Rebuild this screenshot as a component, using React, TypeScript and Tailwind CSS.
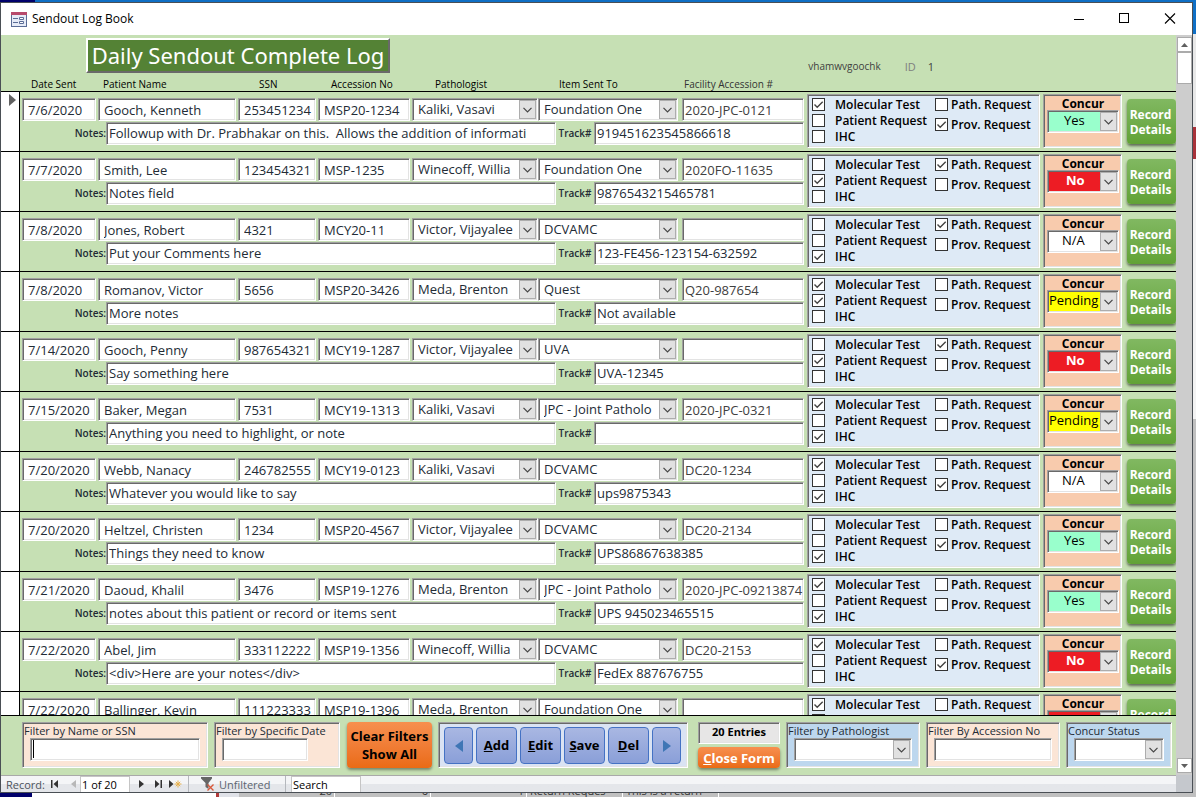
import { useState } from "react";
import type { ReactNode } from "react";

type Entry = {
  date: string;
  name: string;
  ssn: string;
  accession: string;
  pathologist: string;
  sentTo: string;
  facility: string;
  notes: string;
  track: string;
  molecular?: boolean;
  patient?: boolean;
  ihc?: boolean;
  path?: boolean;
  prov?: boolean;
  concur: "Yes" | "No" | "N/A" | "Pending";
};

const entries: Entry[] = [
  { date: "7/6/2020", name: "Gooch, Kenneth", ssn: "253451234", accession: "MSP20-1234", pathologist: "Kaliki, Vasavi", sentTo: "Foundation One", facility: "2020-JPC-0121", notes: "Followup with Dr. Prabhakar on this.  Allows the addition of informati", track: "919451623545866618", molecular: true, prov: true, concur: "Yes" },
  { date: "7/7/2020", name: "Smith, Lee", ssn: "123454321", accession: "MSP-1235", pathologist: "Winecoff, Willia", sentTo: "Foundation One", facility: "2020FO-11635", notes: "Notes field", track: "9876543215465781", patient: true, path: true, concur: "No" },
  { date: "7/8/2020", name: "Jones, Robert", ssn: "4321", accession: "MCY20-11", pathologist: "Victor, Vijayalee", sentTo: "DCVAMC", facility: "", notes: "Put your Comments here", track: "123-FE456-123154-632592", ihc: true, path: true, concur: "N/A" },
  { date: "7/8/2020", name: "Romanov, Victor", ssn: "5656", accession: "MSP20-3426", pathologist: "Meda, Brenton", sentTo: "Quest", facility: "Q20-987654", notes: "More notes", track: "Not available", molecular: true, patient: true, concur: "Pending" },
  { date: "7/14/2020", name: "Gooch, Penny", ssn: "987654321", accession: "MCY19-1287", pathologist: "Victor, Vijayalee", sentTo: "UVA", facility: "", notes: "Say something here", track: "UVA-12345", patient: true, path: true, concur: "No" },
  { date: "7/15/2020", name: "Baker, Megan", ssn: "7531", accession: "MCY19-1313", pathologist: "Kaliki, Vasavi", sentTo: "JPC - Joint Patholo", facility: "2020-JPC-0321", notes: "Anything you need to highlight, or note", track: "", molecular: true, ihc: true, concur: "Pending" },
  { date: "7/20/2020", name: "Webb, Nanacy", ssn: "246782555", accession: "MCY19-0123", pathologist: "Kaliki, Vasavi", sentTo: "DCVAMC", facility: "DC20-1234", notes: "Whatever you would like to say", track: "ups9875343", molecular: true, ihc: true, prov: true, concur: "N/A" },
  { date: "7/20/2020", name: "Heltzel, Christen", ssn: "1234", accession: "MSP20-4567", pathologist: "Victor, Vijayalee", sentTo: "DCVAMC", facility: "DC20-2134", notes: "Things they need to know", track: "UPS86867638385", ihc: true, prov: true, concur: "Yes" },
  { date: "7/21/2020", name: "Daoud, Khalil", ssn: "3476", accession: "MSP19-1276", pathologist: "Meda, Brenton", sentTo: "JPC - Joint Patholo", facility: "2020-JPC-09213874", notes: "notes about this patient or record or items sent", track: "UPS 945023465515", molecular: true, ihc: true, concur: "Yes" },
  { date: "7/22/2020", name: "Abel, Jim", ssn: "333112222", accession: "MSP19-1356", pathologist: "Winecoff, Willia", sentTo: "DCVAMC", facility: "DC20-2153", notes: "<div>Here are your notes</div>", track: "FedEx 887676755", molecular: true, prov: true, concur: "No" },
  { date: "7/22/2020", name: "Ballinger, Kevin", ssn: "111223333", accession: "MSP19-1396", pathologist: "Meda, Brenton", sentTo: "Foundation One", facility: "", notes: "", track: "", molecular: true, concur: "No" },
];

const concurStyles = {
  Yes: "bg-[#99ffcc] pl-4",
  No: "bg-[#ed1c24] pl-[18px] font-bold text-white",
  "N/A": "bg-white pl-3.5",
  Pending: "bg-[#ffff00] pl-px",
};

const sunken =
  "border border-t-[#a0a0a0] border-l-[#a0a0a0] border-r-white border-b-white shadow-[inset_1px_1px_0_#696969,inset_-1px_-1px_0_#e3e3e3]";

const mainCols = "grid grid-cols-[76px_140fr_80px_94px_126fr_144fr_122fr]";

const TextField = ({ label, value, className = "" }: { label: string; value: string; className?: string }) => (
  <input
    type="text"
    aria-label={label}
    defaultValue={value}
    className={`h-[23px] min-w-0 bg-white outline-none ${sunken} ${className}`}
  />
);

const Arrow = () => (
  <span className="pointer-events-none absolute top-0.5 right-0.5 bottom-0.5 flex w-[17px] items-center justify-center border border-[#adadad] bg-[#e1e1e1]">
    <svg width="9" height="6" viewBox="0 0 9 6" fill="none" stroke="#444" strokeWidth="1.2">
      <path d="M0.5 0.8 4.5 4.8 8.5 0.8" />
    </svg>
  </span>
);

const Combo = ({ label, value, className = "", selectClass = "bg-white pl-[5px]" }: { label: string; value: string; className?: string; selectClass?: string }) => (
  <div className={`relative h-[23px] min-w-0 ${className}`}>
    <select
      aria-label={label}
      defaultValue={value}
      className={`block h-full w-full appearance-none overflow-hidden pr-[18px] outline-none ${sunken} ${selectClass}`}
    >
      <option>{value}</option>
    </select>
    <Arrow />
  </div>
);

const Check = ({ label, checked = false, gap = "gap-2.5" }: { label: string; checked?: boolean; gap?: string }) => (
  <label className={`flex h-[13px] items-center whitespace-nowrap ${gap}`}>
    <span className="relative size-[13px]">
      <input
        type="checkbox"
        defaultChecked={checked}
        className="peer block size-[13px] appearance-none border border-[#333] bg-white"
      />
      <svg
        viewBox="0 0 13 13"
        fill="none"
        stroke="#444"
        strokeWidth="1.4"
        className="pointer-events-none absolute inset-0 hidden size-[13px] peer-checked:block"
      >
        <path d="M2.5 6.5 5.2 9.2 10.7 3.7" />
      </svg>
    </span>
    {label}
  </label>
);

const EntryRow = ({ entry, current }: { entry: Entry; current: boolean }) => (
  <li className="flex h-[60px] shrink-0 border-b border-black">
    <div className="w-[19px] shrink-0 border-r border-black bg-white pt-0.5 pl-2">
      {current && (
        <svg width="7" height="12" viewBox="0 0 7 12" fill="#606060">
          <path d="M0 0 7 6 0 12z" />
        </svg>
      )}
    </div>
    <div className="min-w-0 flex-1 pt-1.5 pl-0.5 text-[13px] text-[#222b35]">
      <div className={mainCols}>
        <TextField label="Date Sent" value={entry.date} className="mr-0.5 pl-[5px]" />
        <TextField label="Patient Name" value={entry.name} className="mr-0.5 pl-[5px]" />
        <TextField label="SSN" value={entry.ssn} className="mr-0.5 pl-[5px]" />
        <TextField label="Accession No" value={entry.accession} className="mr-0.5 pl-[5px]" />
        <Combo label="Pathologist" value={entry.pathologist} />
        <Combo label="Item Sent To" value={entry.sentTo} className="mr-1" />
        <TextField label="Facility Accession #" value={entry.facility} className="pl-0.5 text-[#404040]" />
      </div>
      <div className="mt-px grid grid-cols-[84px_450fr_38px_210fr]">
        <span className="pt-1 text-right text-[10px] font-semibold">Notes:</span>
        <TextField label="Notes" value={entry.notes} className="pb-0.5 pl-0.5" />
        <span className="pt-1 text-center text-[10px] font-semibold">Track#</span>
        <TextField label="Tracking number" value={entry.track} className="pb-0.5 pl-0.5" />
      </div>
    </div>
    <div className={`mt-0.5 ml-[3px] flex h-[54px] w-[233px] shrink-0 bg-[#deeaf6] pt-[3px] pl-1 text-[12px] font-semibold text-black ${sunken}`}>
      <div className="flex w-[123px] flex-col gap-[3px]">
        <Check label="Molecular Test" checked={entry.molecular} />
        <Check label="Patient Request" checked={entry.patient} />
        <Check label="IHC" checked={entry.ihc} />
      </div>
      <div className="flex flex-col gap-[7px]">
        <Check label="Path. Request" checked={entry.path} gap="gap-[3px]" />
        <Check label="Prov. Request" checked={entry.prov} gap="gap-[3px]" />
      </div>
    </div>
    <div className={`mt-0.5 ml-[3px] h-[54px] w-[79px] shrink-0 bg-[#f8cbad] pr-0.5 pl-[3px] ${sunken}`}>
      <div className="h-[15px] pt-px text-center text-[12px] leading-4 font-bold">Concur</div>
      <Combo label="Concur" value={entry.concur} selectClass={`pb-0.5 text-[13px] ${concurStyles[entry.concur]}`} />
    </div>
    <button className="mt-[7px] ml-[5px] h-[45px] w-[49px] shrink-0 rounded bg-linear-to-b from-[#81b861] to-[#61a235] pr-0.5 text-[12px] leading-[15px] font-bold text-white shadow-[0_2px_3px_#00000088]">
      Record Details
    </button>
  </li>
);

const Panel = ({ className, children }: { className: string; children: ReactNode }) => (
  <div className={`h-[46px] shrink-0 text-[11px] leading-[15px] text-[#222b35] ${sunken} ${className}`}>{children}</div>
);

const NavButton = ({ letter, rest }: { letter: string; rest: string }) => (
  <button className="h-[37px] w-[41px] rounded border border-[#4472c4] bg-linear-to-b from-[#a9b7e2] to-[#8a9fd8] text-[13px] font-bold text-black">
    <u>{letter}</u>
    {rest}
  </button>
);

const StepButton = ({ label, d }: { label: string; d: string }) => (
  <button
    aria-label={label}
    className="flex h-[37px] w-[29px] items-center justify-center rounded border border-[#4472c4] bg-linear-to-b from-[#a9b7e2] to-[#8a9fd8]"
  >
    <svg width="8" height="12" viewBox="0 0 8 12" fill="#3f76b5">
      <path d={d} />
    </svg>
  </button>
);

const TitleBar = () => (
  <header className="flex h-8 shrink-0 items-center bg-white pl-2.5 text-[12px] text-black">
    <svg width="16" height="15" viewBox="0 0 16 15">
      <rect x="0.5" y="0.5" width="15" height="14" fill="#e6ebf7" stroke="#5a6c96" />
      <rect width="16" height="3" fill="#b84a6c" />
      <path d="M2 6.5h5M2 10.5h5" stroke="#5a6c96" />
      <path d="M8.5 5.5h4v2h-4zM8.5 9.5h4v2h-4z" fill="#fff" stroke="#5a6c96" />
    </svg>
    <h1 className="ml-[5px] flex-1">Sendout Log Book</h1>
    <div className="flex gap-[33px] pr-4">
      <button aria-label="Minimize">
        <svg width="12" height="12" viewBox="0 0 12 12" stroke="#000">
          <path d="M0 6.5h10" />
        </svg>
      </button>
      <button aria-label="Maximize">
        <svg width="12" height="12" viewBox="0 0 12 12" fill="none" stroke="#000">
          <rect x="0.5" y="0.5" width="9" height="9" />
        </svg>
      </button>
      <button aria-label="Close">
        <svg width="12" height="12" viewBox="0 0 12 12" stroke="#000" strokeWidth="1.1">
          <path d="M1 0.5 11 10.5M11 0.5 1 10.5" />
        </svg>
      </button>
    </div>
  </header>
);

const FormHeader = () => (
  <div className="flex h-[57px] shrink-0 flex-col border-b border-black">
    <div className="flex h-11 items-start">
      <h2 className="mt-[3px] ml-[85px] h-[35px] w-[304px] border-2 border-t-white border-r-[#696969] border-b-[#696969] border-l-white bg-[#548235] text-center font-['Noto_Sans',sans-serif] text-[22px] leading-[30px] whitespace-nowrap text-white">
        Daily Sendout Complete Log
      </h2>
      <div className="flex flex-1 items-center justify-end pt-6 pr-[242px] text-[11px] leading-[15px] text-[#404040]">
        <span className="text-[10px]">vhamwvgoochk</span>
        <span className="ml-6 text-[#7f7f7f]">ID</span>
        <span className="ml-3">1</span>
      </div>
    </div>
    <div className="flex text-[10px] leading-[13px] text-black">
      <div className={`ml-[21px] min-w-0 flex-1 ${mainCols}`}>
        <span className="pl-[9px]">Date Sent</span>
        <span className="pl-[5px]">Patient Name</span>
        <span className="pl-[21px]">SSN</span>
        <span className="pl-[13px]">Accession No</span>
        <span className="pl-[23px]">Pathologist</span>
        <span className="pl-[21px]">Item Sent To</span>
        <span className="pl-0.5 text-[#333]">Facility Accession #</span>
      </div>
      <div className="w-[372px] shrink-0" />
    </div>
  </div>
);

const FormFooter = () => (
  <footer className="flex h-[60px] shrink-0 items-start justify-between border-t border-black pt-1.5 pr-1 pl-[21px]">
    <Panel className="w-[186px] bg-[#fbe5d6] pl-px">
      <label htmlFor="filter-name" className="block">Filter by Name or SSN</label>
      <div className="relative ml-1.5 w-[170px]">
        <input id="filter-name" className={`block h-[23px] w-full bg-white pl-1 text-[13px] outline-none ${sunken}`} />
        <span className="absolute top-0.5 left-[3px] h-[18px] w-px bg-black" />
      </div>
    </Panel>
    <Panel className="w-[126px] bg-[#fbe5d6] pl-px">
      <label htmlFor="filter-date" className="block whitespace-nowrap">Filter by Specific Date</label>
      <input id="filter-date" className={`ml-1.5 block h-[23px] w-[86px] bg-white pl-0.5 outline-none ${sunken}`} />
    </Panel>
    <button className="ml-px h-[46px] w-[85px] rounded bg-linear-to-b from-[#f78f4e] to-[#ea6b14] text-[13px] leading-[18px] font-bold whitespace-nowrap text-black shadow-[0_2px_3px_#00000066]">
      Clear Filters
      <br />
      Show All
    </button>
    <Panel className="flex w-[250px] items-start justify-between bg-[#dae3f3] pt-1 pr-1.5 pl-[5px]">
      <StepButton label="Previous" d="M8 0 0 6 8 12z" />
      <NavButton letter="A" rest="dd" />
      <NavButton letter="E" rest="dit" />
      <NavButton letter="S" rest="ave" />
      <NavButton letter="D" rest="el" />
      <StepButton label="Next" d="M0 0 8 6 0 12z" />
    </Panel>
    <div className="ml-1 flex w-[82px] shrink-0 flex-col gap-[3px]">
      <div className={`h-[22px] bg-[#e7e6e6] text-center text-[11px] leading-[18px] font-bold ${sunken}`}>20 Entries</div>
      <button className="h-[21px] rounded bg-linear-to-b from-[#f78f4e] to-[#ea6b14] text-[13px] leading-[20px] font-bold whitespace-nowrap text-white shadow-[0_2px_3px_#00000066]">
        <u>C</u>lose Form
      </button>
    </div>
    <Panel className="w-[134px] bg-[#bdd7ee] pl-px">
      <span className="block">Filter by Pathologist</span>
      <Combo label="Filter by Pathologist" value="" className="ml-1.5 w-[118px]" />
    </Panel>
    <Panel className="w-[134px] bg-[#fbe5d6] pl-px">
      <label htmlFor="filter-accession" className="block whitespace-nowrap">Filter By Accession No</label>
      <input id="filter-accession" className={`ml-1.5 block h-[23px] w-[118px] bg-white pl-0.5 outline-none ${sunken}`} />
    </Panel>
    <Panel className="w-[106px] bg-[#bdd7ee] pl-px">
      <span className="block">Concur Status</span>
      <Combo label="Concur Status" value="" className="ml-1.5 w-[90px]" />
    </Panel>
  </footer>
);

const RecordBar = () => {
  const [search, setSearch] = useState("Search");

  return (
    <nav className="flex h-[17px] shrink-0 items-center border-t border-[#a9a9a9] bg-linear-to-b from-[#f4f5f7] from-50% to-[#e4e6ea] to-50% text-[11px] leading-[15px] text-[#4c535c]">
      <span className="w-[50px] pl-[5px]">Record:</span>
      <button aria-label="First record" className="w-[20px]">
        <svg width="8" height="8" viewBox="0 0 8 8" fill="#333">
          <path d="M0 0h1.5v8H0zM7 0v8L2.5 4z" />
        </svg>
      </button>
      <button aria-label="Previous record" className="w-[9px]">
        <svg width="5" height="8" viewBox="0 0 5 8" fill="#b8b8b8">
          <path d="M5 0v8L0 4z" />
        </svg>
      </button>
      <input aria-label="Current record" defaultValue="1 of 20" className="h-4 w-[50px] border border-b-0 border-[#c5c5c5] bg-white pl-px text-black" />
      <button aria-label="Next record" className="ml-[9px] w-[16px]">
        <svg width="5" height="8" viewBox="0 0 5 8" fill="#333">
          <path d="M0 0v8l5-4z" />
        </svg>
      </button>
      <button aria-label="Last record" className="w-[14px]">
        <svg width="7" height="8" viewBox="0 0 7 8" fill="#333">
          <path d="M0 0v8l4.5-4zM5.5 0H7v8H5.5z" />
        </svg>
      </button>
      <button aria-label="New record" className="w-[19px]">
        <svg width="13" height="8" viewBox="0 0 13 8">
          <path d="M0 0v8l4.5-4z" fill="#333" />
          <path d="M9 0.5v7M5.5 4h7M6.8 1.8l4.4 4.4M11.2 1.8 6.8 6.2" stroke="#e8b04a" strokeWidth="1" />
        </svg>
      </button>
      <div className="flex h-full w-[98px] items-center gap-1 border-x border-[#b5b8bd] pl-3 text-[#5c6570]">
        <svg width="14" height="14" viewBox="0 0 14 14">
          <path d="M0 0h11v1.5L7.5 6v6l-3-2V6L0 1.5z" fill="#666" />
          <path d="M6.5 7.5l6 6M12.5 7.5l-6 6" stroke="#d9583a" strokeWidth="1.4" />
        </svg>
        Unfiltered
      </div>
      <input
        aria-label="Search"
        value={search}
        onChange={(e) => setSearch(e.target.value)}
        className="ml-[5px] h-4 w-[70px] border border-b-0 border-[#c5c5c5] bg-white pl-px text-black"
      />
    </nav>
  );
};

const ScrollBar = () => (
  <div className="flex w-4 shrink-0 flex-col bg-[#cdcdcd] pt-0.5 pl-px">
    <button aria-label="Scroll up" className="flex h-[15px] items-center justify-center border border-[#ababab] bg-white">
      <svg width="7" height="4" viewBox="0 0 7 4" fill="#606060">
        <path d="M0 4 3.5 0 7 4z" />
      </svg>
    </button>
    <div className="h-8 border border-[#ababab] bg-white" />
    <div className="flex-1" />
    <button aria-label="Scroll down" className="mb-0.5 flex h-[15px] items-center justify-center border border-[#ababab] bg-white">
      <svg width="7" height="4" viewBox="0 0 7 4" fill="#606060">
        <path d="M0 0 3.5 4 7 0z" />
      </svg>
    </button>
    <div className="-ml-px h-[17px] bg-[#c5c8cd]" />
  </div>
);

// strip of the datasheet that shows below the form window
const Datasheet = () => (
  <div className="flex h-1 shrink-0 items-end overflow-hidden text-[11px] leading-3 whitespace-nowrap text-[#333]">
    <div className="h-1 w-8 bg-[#00006b]" />
    <div className="h-1 w-[184px] bg-white" />
    <div className="h-1 w-[3px] bg-[#b03a3a]" />
    <div className="h-1 w-5 bg-[#e0e2e8]" />
    <span className="w-[96px] border-r border-white pr-0.5 text-right">20</span>
    <span className="w-[96px] border-r border-white pr-0.5 text-right">6</span>
    <span className="w-[96px] border-r border-white pr-0.5 text-right">1</span>
    <span className="w-[96px] border-r border-white pl-[3px]">Return Reques</span>
    <span className="w-[96px] border-r border-white pl-[3px]">This is a return</span>
  </div>
);

const App = () => {
  return (
    <div className="flex h-screen flex-col overflow-hidden bg-[#c0c0c0] font-['Open_Sans',sans-serif]">
      <div className="flex h-0.5 shrink-0 bg-[#0f6fc5]">
        <div className="w-[35px] bg-[#00006b]" />
      </div>
      <div className="flex min-h-0 flex-1">
        <div className="flex min-w-0 flex-1 flex-col border border-[#4a4f55] bg-[#c6e0b4]">
          <TitleBar />
          <div className="flex min-h-0 flex-1">
            <main className="flex min-w-0 flex-1 flex-col">
              <FormHeader />
              <ul className="flex min-h-0 flex-1 flex-col overflow-hidden">
                {entries.map((entry, i) => (
                  <EntryRow key={i} entry={entry} current={i === 0} />
                ))}
              </ul>
              <FormFooter />
              <RecordBar />
            </main>
            <ScrollBar />
          </div>
        </div>
        <div className="w-[3px] shrink-0">
          <div className="h-8 bg-[#0f6fc5]" />
          <div className="h-[93px] bg-[#e8e8e8]" />
          <div className="h-8 bg-[#a8323a]" />
          <div className="h-[260px] bg-[#f3f3f3]" />
        </div>
      </div>
      <Datasheet />
    </div>
  );
};

export default App;
